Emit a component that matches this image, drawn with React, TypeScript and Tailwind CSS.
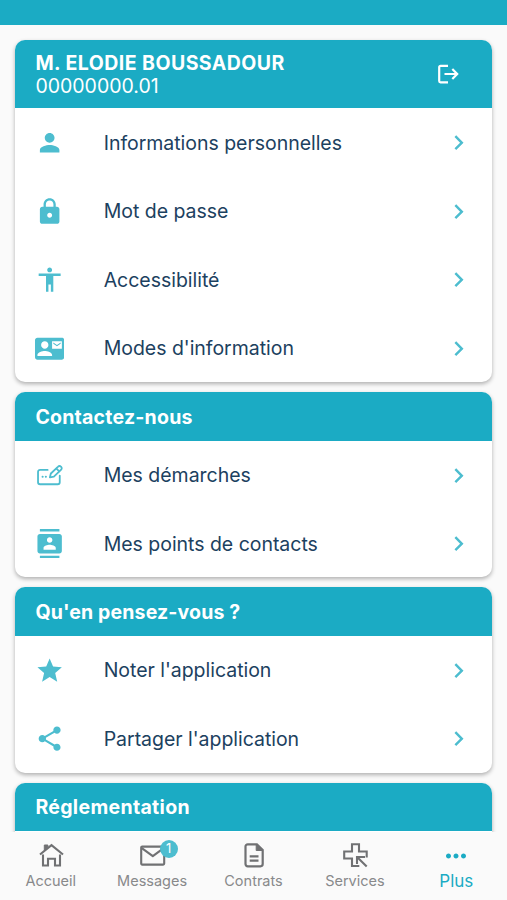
import type { ReactNode } from "react";
import type { IconType } from "react-icons";
import {
  MdAccessibility,
  MdChevronRight,
  MdContactMail,
  MdContacts,
  MdLock,
  MdMoreHoriz,
  MdPerson,
  MdShare,
  MdStar,
} from "react-icons/md";

function LogoutIcon() {
  return (
    <svg width="24" height="24" viewBox="0 0 24 24" fill="none" stroke="currentColor" strokeWidth="2.2">
      <path d="M12 3.9H4.500a1.300 1.300 0 0 0-1.300 1.300v13.800a1.300 1.300 0 0 0 1.300 1.300h7.500" />
      <path d="M8.500 12h12.500M16.300 7L21.200 12l-4.900 5" />
    </svg>
  );
}

function RequestIcon({ className }: { className?: string }) {
  return (
    <svg className={className} viewBox="0 0 29 29" fill="none" stroke="currentColor" strokeWidth="1.8" strokeLinecap="round" strokeLinejoin="round">
      <path d="M12.5 8.8H5a2 2 0 0 0-2 2V21a2 2 0 0 0 2 2h17.500a2 2 0 0 0 2-2v-6.500" />
      <path d="M14.700 16.200l1-3.800 7.200-6.900a1.900 1.900 0 0 1 2.700 0l.3.300a1.900 1.900 0 0 1 0 2.700l-7.200 6.900z" />
      <path d="M21.200 7.500l2.800 2.800" />
      <path d="M7.500 15.700h.1M10.700 15.700h.1" strokeWidth="2" />
    </svg>
  );
}

function HomeIcon() {
  return (
    <svg width="30" height="30" viewBox="0 0 30 30" fill="none" stroke="currentColor" strokeWidth="2.1">
      <path d="M4 14.500L15.500 5.200L27 14.500" />
      <path d="M7 14.500V25.500h5v-6.800h7v6.800h5V14.500" />
      <path d="M8.300 10.200V5h3.600v2.500" fill="currentColor" strokeWidth="1" />
    </svg>
  );
}

function MailIcon() {
  return (
    <svg width="30" height="30" viewBox="0 0 30 30" fill="none" stroke="currentColor" strokeWidth="2.1" strokeLinejoin="round">
      <rect x="4.2" y="6.6" width="23" height="18" rx="1" />
      <path d="M4.800 8.200l11 8L26.700 8.200" />
    </svg>
  );
}

function ContractIcon() {
  return (
    <svg width="30" height="30" viewBox="0 0 30 30" fill="none" stroke="currentColor" strokeWidth="2.2">
      <path d="M17.900 4.300H8.700A2.200 2.200 0 0 0 6.500 6.500v17.600A2.200 2.200 0 0 0 8.700 26.300h12.800a2.200 2.200 0 0 0 2.200-2.200V10z" />
      <path d="M17.200 4.300v6.200h6.500z" fill="currentColor" strokeWidth="1" />
      <path d="M10.700 16.300h8.800M10.700 20.700h8.800" />
    </svg>
  );
}

function ServicesIcon() {
  return (
    <svg width="30" height="30" viewBox="0 0 30 30" fill="none" stroke="currentColor" strokeWidth="2.1">
      <path d="M26.700 17.500v-6H19V4.300h-7v7.200H4.200v7H12V26h7.300" />
      <path d="M17 24v-7h8M17.300 17.300l9.400 9.200" />
    </svg>
  );
}

type MenuItem = { label: string; icon: IconType | typeof RequestIcon };

type Section = { title: string; titleClass: string; items: MenuItem[] };

const profileItems: MenuItem[] = [
  { label: "Informations personnelles", icon: MdPerson },
  { label: "Mot de passe", icon: MdLock },
  { label: "Accessibilité", icon: MdAccessibility },
  { label: "Modes d'information", icon: MdContactMail },
];

const sections: Section[] = [
  {
    title: "Contactez-nous",
    titleClass: "tracking-[0.22px]",
    items: [
      { label: "Mes démarches", icon: RequestIcon },
      { label: "Mes points de contacts", icon: MdContacts },
    ],
  },
  {
    title: "Qu'en pensez-vous ?",
    titleClass: "tracking-[0.14px]",
    items: [
      { label: "Noter l'application", icon: MdStar },
      { label: "Partager l'application", icon: MdShare },
    ],
  },
  { title: "Réglementation", titleClass: "tracking-[0.32px]", items: [] },
];

function Card({ header, items }: { header: ReactNode; items: MenuItem[] }) {
  return (
    <section className="min-h-[70px] shrink-0 overflow-hidden rounded-[10px] bg-white shadow-[0_2px_4px_rgba(0,0,0,0.3)]">
      {header}
      {items.map(({ label, icon: Icon }) => (
        <button key={label} className="flex h-[68.4px] w-full items-center pt-px pr-[19px] pl-[19.5px] text-left">
          <Icon className="size-[29.3px] shrink-0 text-[#4dbdcf]" />
          <span className="ml-[39.5px] flex-1 pt-px text-[19.5px] tracking-[-0.03px] whitespace-nowrap text-[#1c4160]">
            {label}
          </span>
          <MdChevronRight className="size-[29.3px] shrink-0 text-[#4dbdcf]" />
        </button>
      ))}
    </section>
  );
}

function Tab({ label, children }: { label: string; children: ReactNode }) {
  return (
    <button className="flex flex-1 flex-col items-center pt-2 text-[#707173]">
      {children}
      <span className="mt-px text-[14.5px] leading-5 text-[#88898b]">{label}</span>
    </button>
  );
}

export default function App() {
  return (
    <div className="flex h-[900px] w-[507px] flex-col overflow-hidden bg-[#fafafa] font-[Inter,sans-serif]">
      <div className="h-[25px] shrink-0 bg-[#1babc4]" />

      <main className="flex min-h-0 flex-1 flex-col gap-[9.8px] overflow-hidden pt-[15px] pr-[15px] pl-[15.4px]">
        <Card
          items={profileItems}
          header={
            <header className="flex h-[68.4px] items-center justify-between bg-[#1babc4] pr-8 pl-5 text-white">
              <div className="pt-0.5 leading-[23.5px]">
                <h1 className="text-[19.5px] font-bold tracking-[0.46px]">M. ELODIE BOUSSADOUR</h1>
                <p className="text-[19.5px]">00000000.01</p>
              </div>
              <LogoutIcon />
            </header>
          }
        />
        {sections.map((section) => (
          <Card
            key={section.title}
            items={section.items}
            header={
              <h2
                className={`flex h-[48.8px] items-center bg-[#1babc4] pt-0.5 pl-5 text-[19.5px] font-bold text-white ${section.titleClass}`}
              >
                {section.title}
              </h2>
            }
          />
        ))}
      </main>

      <nav className="flex h-[68.5px] shrink-0 bg-[#fafafa]">
        <Tab label="Accueil">
          <HomeIcon />
        </Tab>
        <Tab label="Messages">
          <span className="relative">
            <MailIcon />
            <span className="absolute top-0 left-[22.5px] flex size-[18px] items-center justify-center rounded-full bg-[#4dbdcf] text-[13px] text-white">
              1
            </span>
          </span>
        </Tab>
        <Tab label="Contrats">
          <ContractIcon />
        </Tab>
        <Tab label="Services">
          <ServicesIcon />
        </Tab>
        <button className="flex flex-1 flex-col items-center pt-[9px] text-[#1babc4]">
          <MdMoreHoriz className="size-[30px]" />
          <span className="text-[17px] leading-5">Plus</span>
        </button>
      </nav>
    </div>
  );
}
